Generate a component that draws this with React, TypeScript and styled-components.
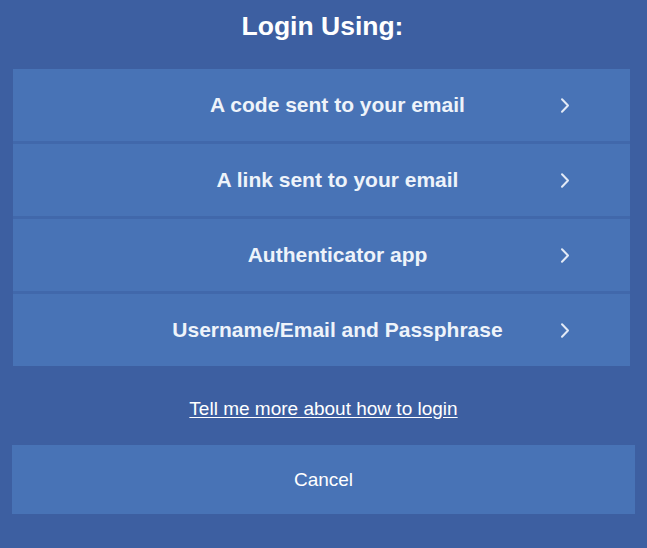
import React from 'react';
import styled, { createGlobalStyle } from 'styled-components';

const GlobalStyle = createGlobalStyle`
  html, body {
    margin: 0;
    padding: 0;
    background: #3d5fa1;
  }
  body {
    font-family: "Liberation Sans", Arial, sans-serif;
  }
`;

const Page = styled.div`
  width: 647px;
  min-height: 548px;
  box-sizing: border-box;
  padding: 11px 12px 0 12px;
  background: #3d5fa1;
  display: flex;
  flex-direction: column;
`;

const Title = styled.h1`
  margin: 0 2px 0 0;
  font-size: 26.5px;
  line-height: 30px;
  font-weight: bold;
  color: #ffffff;
  text-align: center;
`;

const Options = styled.div`
  margin: 28px 5px 0 1px;
  display: flex;
  flex-direction: column;
  gap: 3px;
  background: #4168ab;
`;

const Option = styled.button`
  height: 72px;
  border: none;
  margin: 0;
  padding: 0 60px 0 102px;
  background: #4873b6;
  display: flex;
  align-items: center;
  font-family: inherit;
  cursor: pointer;
`;

const OptionLabel = styled.span`
  flex: 1;
  text-align: center;
  font-size: 21px;
  font-weight: bold;
  color: #eef3fa;
`;

const Chevron = styled.svg`
  width: 10px;
  height: 17px;
  flex: none;
`;

const HelpLink = styled.a`
  margin-top: 32px;
  align-self: center;
  font-size: 19px;
  line-height: 22px;
  color: #ffffff;
  text-decoration: underline;
  text-underline-offset: 2px;
  cursor: pointer;
`;

const CancelButton = styled.button`
  margin-top: 25px;
  height: 69px;
  border: none;
  background: #4873b6;
  color: #ffffff;
  font-family: inherit;
  font-size: 19px;
  cursor: pointer;
`;

const options = [
  'A code sent to your email',
  'A link sent to your email',
  'Authenticator app',
  'Username/Email and Passphrase',
];

const ChevronIcon = () => (
  <Chevron viewBox="0 0 10 17">
    <path d="M2 2.2 L8 8.5 L2 14.8" fill="none" stroke="#e3eaf6" strokeWidth="2" strokeLinecap="round" strokeLinejoin="round" />
  </Chevron>
);

export default function App() {
  return (
    <>
      <GlobalStyle />
      <Page>
        <Title>Login Using:</Title>
        <Options>
          {options.map((label) => (
            <Option key={label}>
              <OptionLabel>{label}</OptionLabel>
              <ChevronIcon />
            </Option>
          ))}
        </Options>
        <HelpLink>Tell me more about how to login</HelpLink>
        <CancelButton>Cancel</CancelButton>
      </Page>
    </>
  );
}
